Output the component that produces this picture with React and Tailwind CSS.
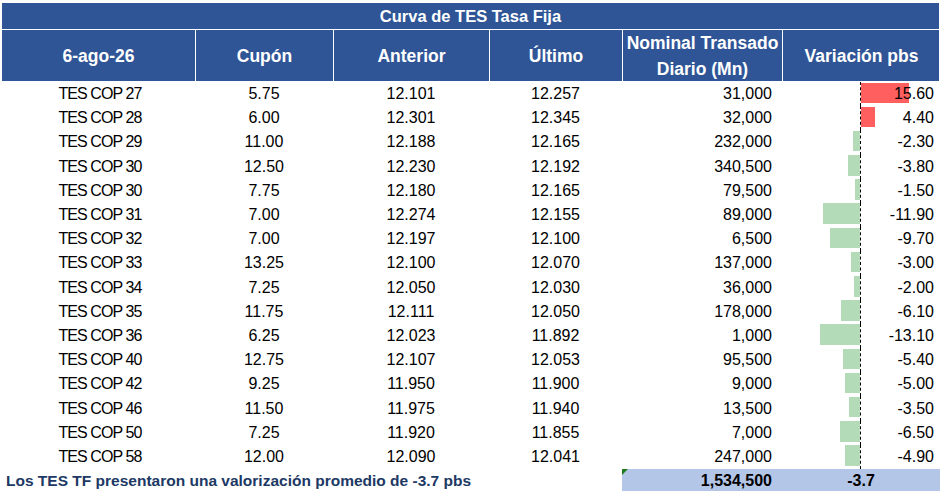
import React from 'react';

const rows = [
  ['TES COP 27', '5.75', '12.101', '12.257', '31,000', 15.6],
  ['TES COP 28', '6.00', '12.301', '12.345', '32,000', 4.4],
  ['TES COP 29', '11.00', '12.188', '12.165', '232,000', -2.3],
  ['TES COP 30', '12.50', '12.230', '12.192', '340,500', -3.8],
  ['TES COP 30', '7.75', '12.180', '12.165', '79,500', -1.5],
  ['TES COP 31', '7.00', '12.274', '12.155', '89,000', -11.9],
  ['TES COP 32', '7.00', '12.197', '12.100', '6,500', -9.7],
  ['TES COP 33', '13.25', '12.100', '12.070', '137,000', -3.0],
  ['TES COP 34', '7.25', '12.050', '12.030', '36,000', -2.0],
  ['TES COP 35', '11.75', '12.111', '12.050', '178,000', -6.1],
  ['TES COP 36', '6.25', '12.023', '11.892', '1,000', -13.1],
  ['TES COP 40', '12.75', '12.107', '12.053', '95,500', -5.4],
  ['TES COP 42', '9.25', '11.950', '11.900', '9,000', -5.0],
  ['TES COP 46', '11.50', '11.975', '11.940', '13,500', -3.5],
  ['TES COP 50', '7.25', '11.920', '11.855', '7,000', -6.5],
  ['TES COP 58', '12.00', '12.090', '12.041', '247,000', -4.9],
];

// px per basis point, axis sits 78px into the last column
const SCALE = 3.07;
const AXIS = 78;

const cols = 'grid grid-cols-[193px_138px_156px_133px_160px_158px]';

function Bar({ value }) {
  const w = Math.abs(value) * SCALE;
  const pos = value >= 0;
  return (
    <div
      className={`absolute top-[0.5px] h-[20.5px] ${pos ? 'bg-[#ff5f5f]' : 'bg-[#b3dbb8]'}`}
      style={{ left: pos ? AXIS + 1 : AXIS - w, width: w }}
    />
  );
}

export default function App() {
  return (
    <div className="w-[940px] h-[491px] bg-white overflow-hidden pt-[3px] pl-[2px] font-['Liberation_Sans',Arial,sans-serif]">
      {/* title */}
      <div className="w-[937px] h-[26px] bg-[#2f5597] text-white font-bold text-[16.5px] flex items-center justify-center">
        Curva de TES Tasa Fija
      </div>
      <div className="h-px w-[937px] bg-white" />

      {/* header */}
      <div className={`${cols} h-[51px] bg-[#2f5597] text-white font-bold text-[17.5px] w-[937px]`}>
        <div className="flex items-center justify-center">6-ago-26</div>
        <div className="flex items-center justify-center border-l border-white">Cupón</div>
        <div className="flex items-center justify-center border-l border-white">Anterior</div>
        <div className="flex items-center justify-center border-l border-white">Último</div>
        <div className="flex items-center justify-center border-l border-white text-center leading-[26px] whitespace-nowrap">
          Nominal Transado<br />Diario (Mn)
        </div>
        <div className="flex items-center justify-center border-l border-white">Variación pbs</div>
      </div>

      {/* body */}
      <div className="pt-px">
        {rows.map((r, i) => (
          <div key={i} className={`${cols} h-[24.2px] text-[16px] text-black leading-none`}>
            <div className="flex items-center justify-center pl-[3px] tracking-[-0.9px]">{r[0]}</div>
            <div className="flex items-center justify-center">{r[1]}</div>
            <div className="flex items-center justify-center">{r[2]}</div>
            <div className="flex items-center justify-center">{r[3]}</div>
            <div className="flex items-center justify-end pr-[10px]">{r[4]}</div>
            <div className="relative flex items-center justify-end pr-[6px]">
              <Bar value={r[5]} />
              <div className="absolute left-[78px] top-0 bottom-0 border-l border-dashed border-black" />
              <span className="relative">{r[5].toFixed(2)}</span>
            </div>
          </div>
        ))}
      </div>

      {/* footer */}
      <div className={`${cols} h-[23px] font-bold`}>
        <div className="col-span-4 flex items-center pl-[4px] text-[15.5px] text-[#203864] whitespace-nowrap">
          Los TES TF presentaron una valorización promedio de -3.7 pbs
        </div>
        <div className="relative bg-[#b4c6e7] flex items-center justify-end pr-[10px] text-[16px] text-black">
          <svg className="absolute left-0 top-0" width="6" height="6" viewBox="0 0 6 6">
            <polygon points="0,0 6,0 0,6" fill="#1e7b1e" />
          </svg>
          1,534,500
        </div>
        <div className="bg-[#b4c6e7] flex items-center justify-center text-[16px] text-black">-3.7</div>
      </div>
    </div>
  );
}
